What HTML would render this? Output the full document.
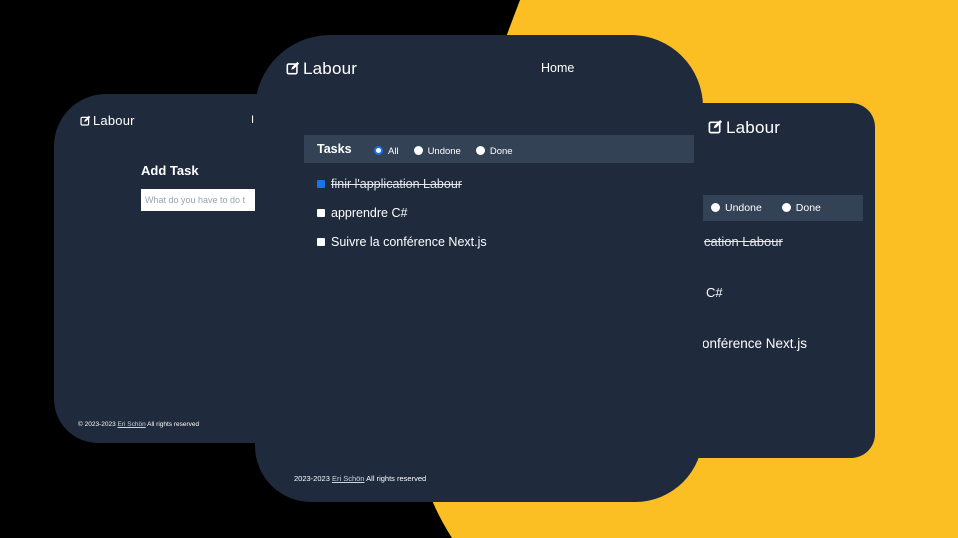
<!DOCTYPE html>
<html><head><meta charset="utf-8"><style>
*{margin:0;padding:0;box-sizing:border-box}
body{width:958px;height:538px;background:#000;position:relative;overflow:hidden;font-family:"Liberation Sans","DejaVu Sans",sans-serif;color:#fff}
.card{position:absolute;background:#1f2a3c}
.abs{position:absolute;white-space:nowrap}
.bar{position:absolute;background:#344256}
.rad{display:inline-block;width:9px;height:9px;border-radius:50%;background:#fff;vertical-align:-1px;margin-right:5px}
.rad.on{border:2.5px solid #1a73e8;background:#fff}
.cb{display:inline-block;width:8px;height:8px;background:#fff;border-radius:1px;vertical-align:0;margin-right:6px}
.cb.on{background:#1a73e8}
.logo{font-weight:300;letter-spacing:.2px}
</style></head><body>
<svg class="abs" style="left:0;top:0" width="958" height="538"><path d="M520,0 Q 420 260 415 420 Q 415 480 452 538 L958 538 L958 0 Z" fill="#fbbf24"/></svg>

<!-- right card -->
<div class="card" style="left:600px;top:103px;width:275px;height:355px;border-radius:24px"></div>
<div class="abs logo" style="left:708px;top:118px;font-size:17px"><svg width="15" height="15" viewBox="0 0 16 16" style="vertical-align:-1px;margin-right:3px"><rect x="1.5" y="3.5" width="11" height="11" rx="1.5" fill="none" stroke="#fff" stroke-width="1.8"/><path d="M6 10 L7 7 L13 1 L15 3 L9 9 Z" fill="#fff"/></svg>Labour</div>
<div class="bar" style="left:700px;top:195px;width:163px;height:26px"></div>
<div class="abs" style="left:711px;top:202px;font-size:10.5px"><span class="rad"></span>Undone<span style="display:inline-block;width:20px"></span><span class="rad"></span>Done</div>
<div class="abs" style="left:704px;top:234px;font-size:13px;text-decoration:line-through;color:#e5e7eb">cation Labour</div>
<div class="abs" style="left:706px;top:285px;font-size:13px">C#</div>
<div class="abs" style="left:702px;top:336px;font-size:13.5px">onférence Next.js</div>

<!-- left card -->
<div class="card" style="left:54px;top:94px;width:260px;height:349px;border-radius:52px 0 0 44px"></div>
<div class="abs logo" style="left:80px;top:113px;font-size:13px"><svg width="11" height="11" viewBox="0 0 16 16" style="vertical-align:-1px;margin-right:2px"><rect x="1.5" y="3.5" width="11" height="11" rx="1.5" fill="none" stroke="#fff" stroke-width="1.8"/><path d="M6 10 L7 7 L13 1 L15 3 L9 9 Z" fill="#fff"/></svg>Labour</div>
<div class="abs" style="left:251px;top:114px;font-size:11px">I</div>
<div class="abs" style="left:141px;top:163px;font-size:13px;font-weight:bold">Add Task</div>
<div class="abs" style="left:141px;top:189px;width:120px;height:22px;background:#fff;color:#9ca3af;font-size:9px;padding:6px 4px">What do you have to do t</div>
<div class="abs" style="left:78px;top:421px;font-size:6.5px">© 2023-2023 <u style="color:#cbd5e1">Eri Schön</u> All rights reserved</div>

<!-- main card -->
<div class="card" style="left:255px;top:35px;width:448px;height:467px;border-radius:75px 72px 68px 56px"></div>
<div class="abs logo" style="left:286px;top:59px;font-size:17px"><svg width="14" height="14" viewBox="0 0 16 16" style="vertical-align:-1px;margin-right:3px"><rect x="1.5" y="3.5" width="11" height="11" rx="1.5" fill="none" stroke="#fff" stroke-width="1.8"/><path d="M6 10 L7 7 L13 1 L15 3 L9 9 Z" fill="#fff"/></svg>Labour</div>
<div class="abs" style="left:541px;top:61px;font-size:12.5px">Home</div>
<div class="bar" style="left:304px;top:135px;width:390px;height:28px"></div>
<div class="abs" style="left:317px;top:142px;font-size:12.5px;font-weight:bold">Tasks</div>
<div class="abs" style="left:374px;top:146px;font-size:9.5px"><span class="rad on"></span>All<span style="display:inline-block;width:15px"></span><span class="rad"></span>Undone<span style="display:inline-block;width:15px"></span><span class="rad"></span>Done</div>
<div class="abs" style="left:317px;top:177px;font-size:12.5px"><span class="cb on"></span><span style="text-decoration:line-through;color:#e5e7eb">finir l'application Labour</span></div>
<div class="abs" style="left:317px;top:206px;font-size:12.5px"><span class="cb"></span>apprendre C#</div>
<div class="abs" style="left:317px;top:235px;font-size:12.5px"><span class="cb"></span>Suivre la conférence Next.js</div>
<div class="abs" style="left:294px;top:474px;font-size:7.5px">2023-2023 <u style="color:#cbd5e1">Eri Schön</u> All rights reserved</div>
</body></html>
